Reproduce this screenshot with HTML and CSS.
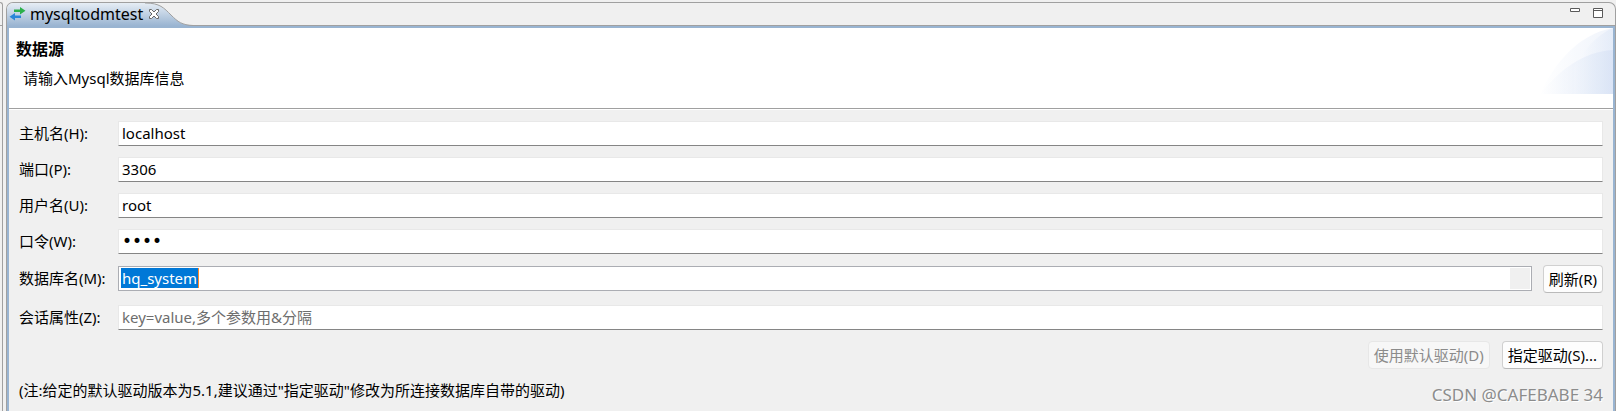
FILE: index.html
```html
<!DOCTYPE html>
<html lang="zh-CN">
<head>
<meta charset="utf-8">
<title>mysqltodmtest</title>
<link rel="stylesheet" href="styles.css">
</head>
<body>
<div class="workbench">
  <div class="side"><div class="side-bar"></div></div>
  <main class="editor">
    <header class="tabbar">
      <div class="tab">
        <svg class="tab-shape" width="186" height="23" viewBox="0 0 186 23" aria-hidden="true">
          <defs><linearGradient id="tabFill" x1="0" y1="0" x2="0" y2="1"><stop offset="0" stop-color="#e6edf5"/><stop offset="1" stop-color="#99b4d1"/></linearGradient></defs>
          <path d="M0 23V0H140C153 0 157 5 164 12S175 22 185 22.500V23Z" fill="url(#tabFill)"/>
          <path d="M138 0C153 0 157 5 164 12S175 22 186 22.500" fill="none" stroke="#a0a0a0"/>
        </svg>
        <svg class="tab-icon" width="17" height="14" viewBox="0 0 17 14" aria-hidden="true">
          <path d="M5 2.500h6V0l5.500 3.700L11 7.400V5H5z" fill="#2bb04a"/>
          <path d="M12 8.500H6V6L.5 9.800 6 13.500V11h6z" fill="#2a86d8"/>
        </svg>
        <span class="tab-title">mysqltodmtest</span>
        <button class="tab-close" type="button" aria-label="关闭">
          <svg width="12" height="12" viewBox="0 0 12 12"><path d="M1.500 1.500h2l2.500 2.500 2.500-2.500h2v2L8 6l2.500 2.500v2h-2L6 8l-2.500 2.500h-2v-2L4 6 1.500 3.500z" fill="#fff" stroke="#696969"/></svg>
        </button>
      </div>
      <div class="window-tools">
        <button type="button" aria-label="最小化"><svg width="10" height="10" viewBox="0 0 10 10"><path d="M.5.5h9v3h-9z" fill="#fff" stroke="#5a5a5a"/></svg></button>
        <button type="button" aria-label="最大化"><svg width="10" height="10" viewBox="0 0 10 10"><path d="M.5.5h9v9h-9zM.5 2.500h9" fill="#fff" stroke="#5a5a5a"/></svg></button>
      </div>
    </header>
    <section class="banner">
      <div>
        <h1>数据源</h1>
        <p>请输入Mysql数据库信息</p>
      </div>
      <svg class="banner-art" width="73" height="66" viewBox="0 0 73 66" aria-hidden="true">
        <defs><linearGradient id="arc" x1="0" y1="0" x2="1" y2="0"><stop offset="0" stop-color="#fff"/><stop offset="1" stop-color="#d3dff4"/></linearGradient></defs>
        <path d="M0 66C14 36 38 6 73 0V66Z" fill="url(#arc)" opacity=".35"/>
        <path d="M34 39C44 22 56 7 73 0V66H34Z" fill="url(#arc)" opacity=".4"/>
        <path d="M0 66C20 42 42 24 73 22V66Z" fill="url(#arc)" opacity=".6"/>
      </svg>
    </section>
    <form class="form">
      <div class="row"><label for="host">主机名(H):</label><input class="field" id="host" type="text" value="localhost"></div>
      <div class="row"><label for="port">端口(P):</label><input class="field" id="port" type="text" value="3306"></div>
      <div class="row"><label for="user">用户名(U):</label><input class="field" id="user" type="text" value="root"></div>
      <div class="row"><label for="pass">口令(W):</label><input class="field field-secret" id="pass" type="password" value="root"></div>
      <div class="row row-db">
        <label for="db">数据库名(M):</label>
        <div class="combo">
          <input class="combo-text" id="db" type="text" value="hq_system">
          <button class="combo-arrow" type="button" aria-label="展开"></button>
        </div>
        <button class="btn" type="button">刷新(R)</button>
      </div>
      <div class="row"><label for="props">会话属性(Z):</label><input class="field" id="props" type="text" placeholder="key=value,多个参数用&amp;分隔"></div>
      <div class="actions">
        <button class="btn" type="button" disabled>使用默认驱动(D)</button>
        <button class="btn" type="button">指定驱动(S)...</button>
      </div>
      <div class="foot">
        <p>(注:给定的默认驱动版本为5.1,建议通过"指定驱动"修改为所连接数据库自带的驱动)</p>
        <span class="credit">CSDN @CAFEBABE 34</span>
      </div>
    </form>
  </main>
</div>
</body>
</html>
```
FILE: styles.css
```css
* { box-sizing: border-box; }
body, h1, p { margin: 0; }
body {
  background: #f0f0f0;
  color: #000;
  font: 15px/20px "Noto Sans", "Noto Sans CJK SC", sans-serif;
  overflow: hidden;
}
button, input { font: inherit; color: inherit; margin: 0; }
.workbench { display: flex; gap: 3px; min-height: 100vh; padding-top: 2px; }
.side {
  width: 3px;
  border-right: 1px solid #a0a0a0;
  border-top: 1px solid #a0a0a0;
  border-top-right-radius: 3px;
}
.side-bar { height: 23px; border-bottom: 1px solid #a0a0a0; }
.editor {
  flex: 1;
  min-width: 0;
  border: 1px solid #a0a0a0;
  border-bottom: 0;
  border-radius: 7px 7px 0 0;
  overflow: hidden;
}
.tabbar {
  display: flex;
  justify-content: space-between;
  height: 25px;
  border-bottom: 2px solid #99b4d1;
  box-shadow: inset 0 -1px #a0a0a0;
}
.tab {
  position: relative;
  display: flex;
  align-items: center;
  width: 186px;
  height: 23px;
  padding: 0 0 1px 2px;
}
.tab-shape { position: absolute; left: 0; top: 0; }
.tab-icon, .tab-title, .tab-close { position: relative; }
.tab-title { margin-left: 4px; font-size: 16px; }
.tab-close, .window-tools button {
  display: flex;
  padding: 0;
  border: 0;
  background: none;
}
.tab-close { margin-left: 5px; }
.window-tools { display: flex; gap: 13px; padding: 5px 12px 0 0; }
.banner {
  display: flex;
  justify-content: space-between;
  height: 81px;
  padding-left: 7px;
  border: solid #99b4d1;
  border-width: 0 2px;
  background: #fff;
  box-shadow: inset 0 -1px #a0a0a0;
}
.banner h1 { margin-top: 11px; font-size: 16px; line-height: 20px; }
.banner p { margin: 9px 0 0 7px; }
.form {
  display: flex;
  flex-direction: column;
  gap: 11px;
  min-height: 302px;
  padding: 12px 10px 0;
  border: solid #99b4d1;
  border-width: 0 2px;
  box-shadow: inset 0 1px #fff;
}
.row { display: flex; align-items: center; height: 25px; }
.row label { flex: 0 0 99px; padding-bottom: 2px; }
.field {
  flex: 1;
  min-width: 0;
  height: 25px;
  padding: 0 3px 2px;
  border: 1px solid #e8e8e8;
  border-bottom-color: #858585;
  background: #fff;
  outline: 0;
}
.field::placeholder { color: #6d6d6d; opacity: 1; }
.field-secret { font: 17px/20px "DejaVu Sans", sans-serif; }
.row-db { align-items: flex-start; height: 29px; }
.row-db label { padding-top: 3px; }
.combo {
  flex: 1;
  display: flex;
  justify-content: space-between;
  height: 25px;
  margin: 1px 11px 0 0;
  padding: 1px 1px 1px 2px;
  border: 1px solid #abadb3;
  background: #fff;
}
.combo-text {
  width: 78px;
  height: 20px;
  padding: 0 0 1px 1px;
  border: 0;
  border-right: 1px solid #ff8728;
  background: #0078d7;
  color: #fff;
  outline: 0;
}
.combo-arrow { width: 20px; height: 21px; padding: 0; border: 0; background: #f0f0f0; }
.btn {
  height: 28px;
  padding: 0 5px;
  border: 1px solid #d0d0d0;
  border-bottom-color: #bababa;
  border-radius: 4px;
  background: #fdfdfd;
  line-height: 20px;
  white-space: nowrap;
}
.btn:disabled { border-color: #e7e7e7; background: #f7f7f7; color: #8b8b8b; }
.actions { display: flex; justify-content: flex-end; gap: 12px; }
.foot { display: flex; justify-content: space-between; white-space: nowrap; }
.credit { margin-top: 5px; color: #8c8c8c; font-size: 17px; text-shadow: 1px 1px #fff; }
```
